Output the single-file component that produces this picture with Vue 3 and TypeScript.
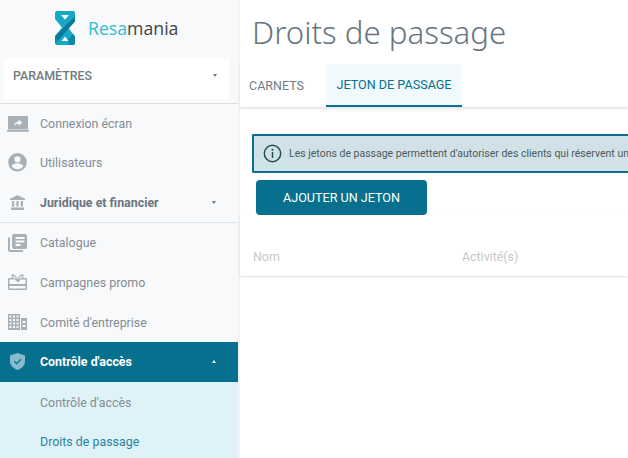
<script setup lang="ts">
interface Item { label: string; w: number; h: number; d: string }
const groupA: Item[] = [
  {
    label: 'Connexion écran', w: 22, h: 16,
    d: 'M2 0h18a1 1 0 0 1 1 1v12.500H1V1a1 1 0 0 1 1-1zM0 14h22v1.700H0zM11.500 3.500v2C9 5.700 7.300 7.300 7 9.700c1-1.400 2.500-2 4.500-2v2l4-3.100z',
  },
  {
    label: 'Utilisateurs', w: 19, h: 19,
    d: 'M9.500 0a9.300 9.300 0 1 0 0 18.600A9.300 9.300 0 0 0 9.500 0zm0 3.200a3.100 3.100 0 1 1 0 6.200 3.100 3.100 0 0 1 0-6.200zm0 13.100a7 7 0 0 1-5.800-3c.1-2 3.900-3 5.800-3s5.700 1 5.800 3a7 7 0 0 1-5.800 3z',
  },
]
const bank = 'M7.500 0l7.500 3.700V5H0V3.700zM2 6h2.200v5.500H2zM6.400 6h2.200v5.500H6.400zM10.800 6H13v5.500h-2.200zM1 12.500h13V15H1z'
const groupB: Item[] = [
  {
    label: 'Catalogue', w: 19, h: 18,
    d: 'M0 3.500h2V16h13v2H2a2 2 0 0 1-2-2zM6 0h11a2 2 0 0 1 2 2v11a2 2 0 0 1-2 2H6a2 2 0 0 1-2-2V2a2 2 0 0 1 2-2zm1.500 3v2h9V3zm0 3.500v2h9v-2zm0 3.500v2h5v-2z',
  },
  {
    label: 'Campagnes promo', w: 19, h: 16,
    d: 'M1 4h17a1 1 0 0 1 1 1v10a1 1 0 0 1-1 1H1a1 1 0 0 1-1-1V5a1 1 0 0 1 1-1zm.500 1.500v4.500h16V5.500h-5L10 8.500 7 5.500zm0 6.500v2.500h16V12zM9.500 4.500C8 1.500 5.500-.5 4 .5 2.500 1.500 3.500 4 6 4.500zM8 3.800C7 2.300 5.500 1.400 4.800 1.800 4.200 2.300 5 3.500 6.500 3.800zM9.500 4.500C11 1.500 13.500-.5 15 .5c1.500 1 .5 3.500-2 4zM11 3.800c1-1.500 2.500-2.400 3.200-2 .6.500-.2 1.700-1.700 2z',
  },
  {
    label: "Comité d'entreprise", w: 19, h: 16,
    d: 'M0 0h12v16H0zm1.500 1.500v2h2v-2zm3.500 0v2h2v-2zm3.500 0v2h2v-2zM1.500 5v2h2V5zM5 5v2h2V5zm3.500 0v2h2V5zM1.500 8.500v2h2v-2zm3.500 0v2h2v-2zm3.500 0v2h2v-2zM1.500 12v2h2v-2zM5 12v2h2v-2zm3.500 0v2h2v-2zM13 4h6v12h-6zm1.500 3v2h3V7zm0 4v2h3v-2z',
  },
]
</script>

<template>
  <div class="page">
    <aside class="side">
      <div class="logo">
        <svg class="mark" width="20" height="34" viewBox="0 0 20 34">
          <path d="M1 0h18l1 2v6l-7 8.500 7 9V32l-1 2H1l-1-2v-6.500l7-9-7-8.500V2z" fill="#17a8c5" />
          <path d="M20 5.500v5L3.500 29H0v-4z" fill="#0a7896" />
          <path d="M0 25.500 3.500 29 0 33zM14 34h5l1-2v-6.500l-2-2.500-5 5.500z" fill="#0d89a8" />
          <path d="M6 4h8l-4 4.700zM6.500 30h7L10 25.500z" fill="#f7f9fb" />
        </svg>
        <span class="brand"><span class="resa">Resa</span>mania</span>
      </div>
      <div class="select">
        <span>PARAMÈTRES</span>
        <i class="caret" />
      </div>
      <nav class="nav first">
        <a v-for="it in groupA" :key="it.label" class="item">
          <span class="ic"><svg :width="it.w" :height="it.h" :viewBox="`0 0 ${it.w} ${it.h}`"><path :d="it.d" fill="#a7b0b6" fill-rule="evenodd" /></svg></span>
          {{ it.label }}
        </a>
        <a class="item strong">
          <span class="ic">
            <svg width="15" height="15" viewBox="0 0 15 15"><path :d="bank" fill="#a7b0b6" /></svg>
          </span>
          Juridique et financier
          <i class="caret" />
        </a>
      </nav>
      <nav class="nav second">
        <a v-for="it in groupB" :key="it.label" class="item">
          <span class="ic"><svg :width="it.w" :height="it.h" :viewBox="`0 0 ${it.w} ${it.h}`"><path :d="it.d" fill="#a7b0b6" fill-rule="evenodd" /></svg></span>
          {{ it.label }}
        </a>
        <a class="item strong active">
          <span class="ic">
            <svg width="15" height="17" viewBox="0 0 15 17"><path d="M7.500 0 15 2.500V8c0 4.200-3 7.500-7.500 9C3 15.500 0 12.200 0 8V2.500z" fill="#88bccc" /><path d="M4.200 8.200l2.400 2.400 4.400-4.400" fill="none" stroke="#06708e" stroke-width="1.300" /></svg>
          </span>
          Contrôle d'accès
          <i class="caret up" />
        </a>
        <div class="subs">
          <a class="sub">Contrôle d'accès</a>
          <a class="sub current">Droits de passage</a>
        </div>
      </nav>
    </aside>
    <main class="main">
      <h1>Droits de passage</h1>
      <div class="tabs">
        <a class="tab">CARNETS</a>
        <a class="tab on">JETON DE PASSAGE</a>
      </div>
      <div class="content">
        <div class="notice">
          <svg width="19" height="19" viewBox="0 0 19 19"><circle cx="9.500" cy="9.500" r="8.200" fill="none" stroke="#234f4f" stroke-width="1.500" /><circle cx="9.500" cy="5.700" r="1" fill="#234f4f" /><path d="M9.500 8v6" stroke="#234f4f" stroke-width="1.500" /></svg>
          <span>Les jetons de passage permettent d'autoriser des clients qui réservent un cours à accéder à votre club</span>
        </div>
        <button class="add">AJOUTER UN JETON</button>
        <div class="thead">
          <span class="c1">Nom</span>
          <span>Activité(s)</span>
        </div>
      </div>
    </main>
  </div>
</template>

<style>
html, body { margin: 0; overflow: hidden; }
</style>

<style scoped>
.page {
  display: flex;
  width: 628px;
  height: 458px;
  overflow: hidden;
  background: #fff;
  font-family: Roboto, "Liberation Sans", sans-serif;
}
.side {
  flex: 0 0 238px;
  background: #f7f9fb;
  border-right: 2px solid #f2f4f6;
}
.logo {
  height: 58px;
  display: flex;
  align-items: flex-start;
  gap: 13px;
  padding: 11px 0 0 55px;
  box-sizing: border-box;
}
.mark { flex: none; }
.brand { font-family: "Open Sans", sans-serif; font-size: 17.700px; line-height: 24px; margin-top: 5px; color: #3f4448; }
.resa { color: #2fbcd5; }
.select {
  display: flex;
  align-items: center;
  justify-content: space-between;
  box-sizing: border-box;
  width: 225px;
  height: 41px;
  margin-left: 4px;
  padding: 0 12px 6px 9px;
  background: #fff;
  font-size: 12.400px;
  font-weight: 500;
  color: #6f7b85;
}
.caret {
  width: 0;
  height: 0;
  border-left: 2.500px solid transparent;
  border-right: 2.500px solid transparent;
  border-top: 3px solid #6f7b85;
}
.caret.up { border-top: 0; border-bottom: 3px solid #fff; }
.nav { border-top: 1px solid #dfe2e4; }
.nav.first { margin-top: 4px; }
.item {
  display: flex;
  align-items: center;
  height: 39.670px;
  padding-right: 22px;
  font-size: 12.400px;
  color: #838d95;
}
.first .item { height: 39.330px; }
.ic {
  flex: 0 0 35px;
  margin-right: 5px;
  display: flex;
  justify-content: center;
}
.strong { font-weight: 700; color: #6a7680; }
.strong .caret { margin-left: auto; }
.second .active { height: 40px; background: #06708e; color: #fff; }
.subs { background: #dff2f7; padding-top: 1px; }
.sub {
  display: flex;
  align-items: center;
  height: 39px;
  padding-left: 40px;
  font-size: 12.400px;
  color: #838d95;
}
.sub.current { color: #2a84a0; }
.main { flex: 1; min-width: 0; }
h1 {
  margin: 0;
  height: 64px;
  padding: 12px 0 0 12px;
  box-sizing: border-box;
  font-family: "Noto Sans", sans-serif;
  font-weight: 300;
  font-size: 31.200px;
  line-height: 40px;
  color: #67757f;
  white-space: nowrap;
}
.tabs {
  display: flex;
  height: 43px;
  box-shadow: 0 2px 2px rgba(0, 0, 0, 0.1);
}
.tab {
  display: flex;
  align-items: center;
  flex: none;
  box-sizing: border-box;
  width: 86px;
  padding-left: 9px;
  font-size: 12.500px;
  color: #6f7b85;
}
.tab.on {
  justify-content: center;
  width: 136px;
  padding: 0;
  background: #f0f9fb;
  color: #06708e;
  font-size: 12.600px;
  border-bottom: 2px solid #06708e;
  border-radius: 3px 3px 0 0;
}
.content { padding: 27px 0 0 12px; }
.notice {
  display: flex;
  align-items: center;
  gap: 7px;
  box-sizing: border-box;
  width: 560px;
  height: 39px;
  padding-left: 9px;
  background: #d0e2e8;
  border: 2px solid #06708e;
  border-right: 0;
  border-radius: 2px 0 0 2px;
  font-size: 10.500px;
  color: #4d5a5c;
  white-space: nowrap;
}
.notice svg { flex: none; }
.add {
  display: block;
  width: 171px;
  height: 35px;
  margin: 7px 0 0 4px;
  border: 0;
  border-radius: 4px;
  background: #06708e;
  color: #fff;
  font-family: inherit;
  font-size: 12.600px;
}
.thead {
  display: flex;
  align-items: center;
  margin-left: -12px;
  padding: 21px 0 0 13px;
  height: 61px;
  box-shadow: 0 1px 2px rgba(0, 0, 0, 0.14);
  font-size: 12.400px;
  color: #c4c8cc;
  box-sizing: border-box;
}
.c1 { flex: 0 0 209px; }
</style>
